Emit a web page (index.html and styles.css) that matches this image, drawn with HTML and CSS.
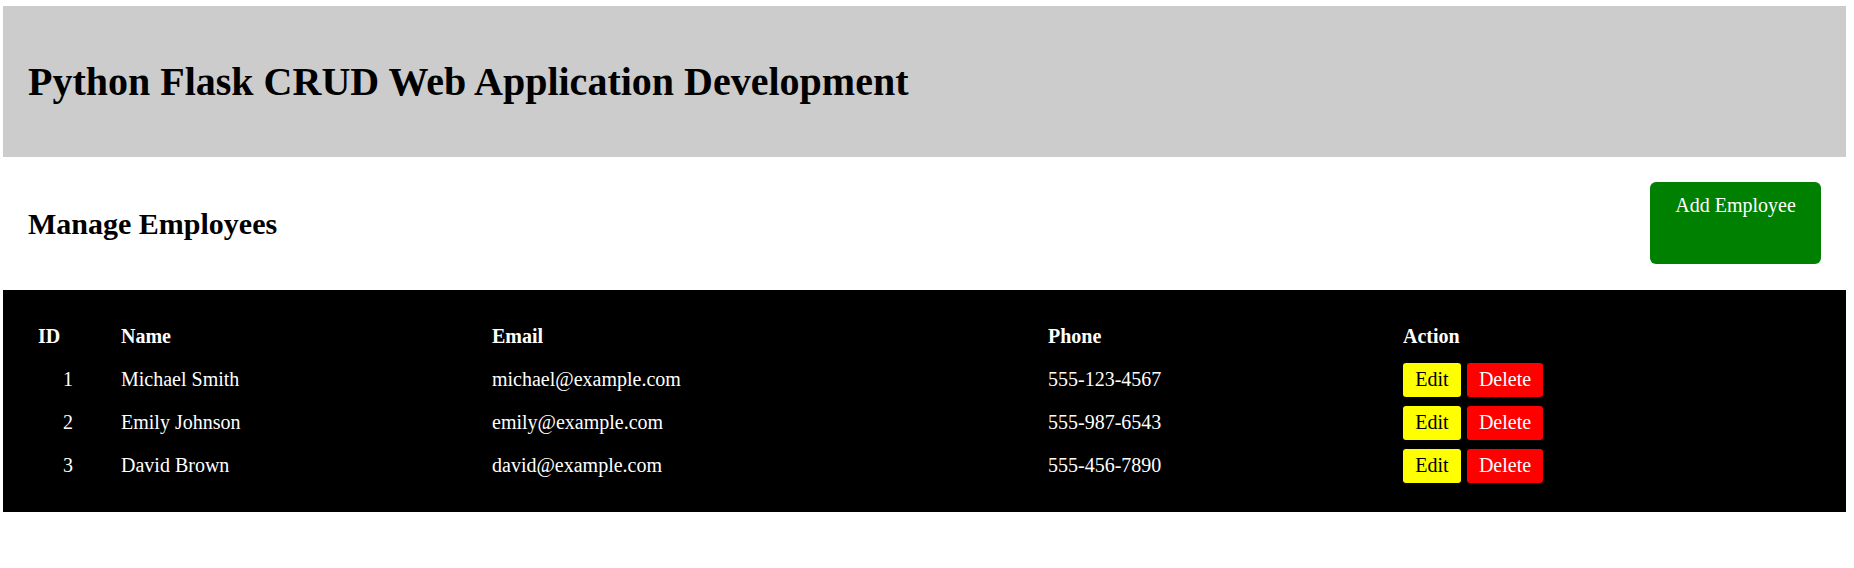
FILE: index.html
```html
<!DOCTYPE html>
<html>
<head>
<meta charset="utf-8">
<title>Python Flask CRUD</title>
<link rel="stylesheet" href="styles.css">
</head>
<body>
<header class="banner">
  <h1 class="title">Python Flask CRUD Web Application Development</h1>
</header>
<section class="toolbar">
  <h2 class="subtitle">Manage Employees</h2>
  <button class="btn-add">Add Employee</button>
</section>
<section class="panel">
  <table class="grid">
    <thead>
      <tr>
        <th class="c-id">ID</th>
        <th class="c-name">Name</th>
        <th class="c-email">Email</th>
        <th class="c-phone">Phone</th>
        <th class="c-action">Action</th>
      </tr>
    </thead>
    <tbody>
      <tr>
        <td class="c-id num">1</td>
        <td class="c-name">Michael Smith</td>
        <td class="c-email">michael@example.com</td>
        <td class="c-phone">555-123-4567</td>
        <td class="c-action"><div class="actions"><button class="btn-edit">Edit</button><button class="btn-del">Delete</button></div></td>
      </tr>
      <tr>
        <td class="c-id num">2</td>
        <td class="c-name">Emily Johnson</td>
        <td class="c-email">emily@example.com</td>
        <td class="c-phone">555-987-6543</td>
        <td class="c-action"><div class="actions"><button class="btn-edit">Edit</button><button class="btn-del">Delete</button></div></td>
      </tr>
      <tr>
        <td class="c-id num">3</td>
        <td class="c-name">David Brown</td>
        <td class="c-email">david@example.com</td>
        <td class="c-phone">555-456-7890</td>
        <td class="c-action"><div class="actions"><button class="btn-edit">Edit</button><button class="btn-del">Delete</button></div></td>
      </tr>
    </tbody>
  </table>
</section>
</body>
</html>
```
FILE: styles.css
```css
html, body {
  margin: 0;
  padding: 0;
  background: #fff;
}
body {
  padding: 6px 8px 0 3px;
  font-family: "Liberation Serif", "Times New Roman", serif;
  font-size: 20px;
  color: #000;
}
.banner {
  background: #cccccc;
  height: 151px;
  display: flex;
  align-items: center;
  padding: 0 25px;
}
.title {
  margin: 0;
  font-size: 40px;
  font-weight: bold;
  line-height: 46px;
}
.toolbar {
  height: 133px;
  display: flex;
  justify-content: space-between;
  align-items: flex-start;
  padding: 0 25px;
}
.subtitle {
  margin: 0;
  margin-top: 49px;
  font-size: 30px;
  font-weight: bold;
  line-height: 36px;
}
.btn-add {
  margin-top: 25px;
  width: 171px;
  height: 82px;
  background: #008000;
  color: #fff;
  border: none;
  border-radius: 6px;
  font-family: "Liberation Serif", "Times New Roman", serif;
  font-size: 20px;
  padding: 12px 0 0;
  display: flex;
  justify-content: center;
  align-items: flex-start;
}
.panel {
  background: #000;
  color: #fff;
  padding: 25px 0 26px 35px;
}
.grid {
  border-collapse: collapse;
  border-spacing: 0;
}
.grid th, .grid td {
  padding: 0;
  text-align: left;
  vertical-align: middle;
}
.grid th {
  height: 42px;
  font-weight: bold;
}
.grid td {
  height: 41px;
  padding-top: 2px;
}
.c-id { width: 83px; }
.grid td.num {
  width: 35px;
  text-align: right;
  padding-right: 48px;
}
.c-name { width: 371px; }
.c-email { width: 556px; }
.c-phone { width: 355px; }
.c-action { width: 300px; }
.actions {
  display: flex;
  gap: 6px;
}
.btn-edit, .btn-del {
  height: 34px;
  border: none;
  border-radius: 3px;
  font-family: "Liberation Serif", "Times New Roman", serif;
  font-size: 20px;
  padding: 0;
}
.btn-edit {
  width: 58px;
  background: #ffff00;
  color: #000;
}
.btn-del {
  width: 76px;
  background: #ff0000;
  color: #fff;
}
```
